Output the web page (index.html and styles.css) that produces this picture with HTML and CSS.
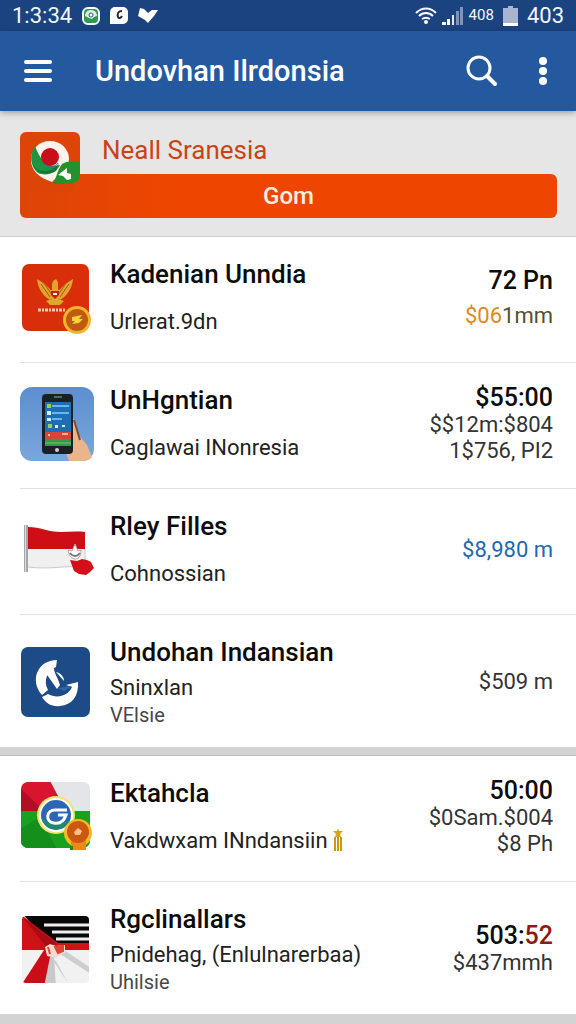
FILE: index.html
```html
<!DOCTYPE html>
<html lang="id">
  <head>
    <meta charset="UTF-8" />
    <meta name="viewport" content="width=device-width, initial-scale=1.0" />
    <title>Undovhan Ilrdonsia</title>
    <link rel="stylesheet" href="styles.css">
  </head>
  <body>
    <div class="status-bar">
      <span class="clock">1:3:34</span>
      <svg width="18" height="18" viewBox="0 0 18 18">
        <rect x="1" y="1" width="16" height="16" rx="5" fill="#2c9a55" stroke="#fff" stroke-width="2" />
        <path d="M3 9c0-4 3-6 6-6s6 2 6 6l-3 1-2 2-3-1z" fill="#d9efe3" />
        <circle cx="9" cy="8" r="2" fill="#fff" stroke="#2a6a58" />
      </svg>
      <svg width="18" height="18" viewBox="0 0 18 18">
        <path d="M5 0h8a5 5 0 0 1 5 5v7a5 5 0 0 1-5 5H0V5a5 5 0 0 1 5-5z" fill="#fff" />
        <path d="M12 4c-4 0-5 3-4 6 1 2 3 1 4-1" fill="none" stroke="#222b3a" stroke-width="2" />
      </svg>
      <svg width="21" height="18" viewBox="0 0 21 18">
        <path d="M2 1l4 1 4 4 4-3h6l-4 6-6 7-3-3-7-4z" fill="#fff" />
      </svg>
      <div class="status-right">
        <svg width="22" height="18" viewBox="0 0 22 18" fill="none" stroke="#fff" stroke-width="2">
          <path d="M1 6c6-6 14-6 20 0M4 9c4-4 10-4 14 0M7 12c3-2 5-2 8 0" />
          <circle cx="11" cy="15" r="1" fill="#fff" />
        </svg>
        <svg width="22" height="18" viewBox="0 0 22 18">
          <path d="M0 15h4v3H0zM5 12h3v6H5z" fill="#fff" />
          <path d="M10 8h2v10h-2z" fill="#e3e9f3" />
          <path d="M14 4h3v14h-3zM18 0h3v18h-3z" fill="#7e93bd" />
        </svg>
        <span class="network">408</span>
        <svg class="battery" width="15" height="20" viewBox="0 0 15 20">
          <path d="M5 0h5v2h5v18H0V2h5z" fill="#a9b5d0" />
          <path d="M0 17h15v3H0z" fill="#fff" />
        </svg>
        <span class="clock">403</span>
      </div>
    </div>

    <header class="app-bar">
      <button type="button" class="icon-button" aria-label="Menu">
        <svg width="30" height="24" viewBox="0 0 30 24" stroke="#fff" stroke-width="4" stroke-linecap="round">
          <path d="M3 3h24M3 12h24M3 21h24" />
        </svg>
      </button>
      <h1>Undovhan Ilrdonsia</h1>
      <button type="button" class="icon-button search" aria-label="Search">
        <svg width="32" height="32" viewBox="0 0 32 32" fill="none" stroke="#fff" stroke-width="3">
          <circle cx="13" cy="13" r="11" />
          <path d="M21 21l8 8" stroke-width="4" stroke-linecap="round" />
        </svg>
      </button>
      <button type="button" class="icon-button" aria-label="More">
        <svg width="10" height="30" viewBox="0 0 10 30" fill="#fff">
          <circle cx="5" cy="5" r="4" />
          <circle cx="5" cy="15" r="4" />
          <circle cx="5" cy="25" r="4" />
        </svg>
      </button>
    </header>

    <main>
      <section class="promo">
        <div class="promo-head">
          <svg class="promo-icon" width="60" height="60" viewBox="0 0 60 60">
            <path d="M6 0h48a6 6 0 0 1 6 6v36l-10 18H0V6a6 6 0 0 1 6-6z" fill="#dd4508" />
            <path d="M30 9c11 0 19 8 19 18 0 8-10 16-17 23C20 46 11 39 11 28 11 17 19 9 30 9z" fill="#fff3ec" />
            <path d="M15 14c-6 9-5 20 3 27 9 4 19-1 22-8-12 3-19-3-25-19z" fill="#1e9440" />
            <path d="M12 33c8 9 20 8 27-2l-3 8c-8 5-19 3-24-6z" fill="#11773d" />
            <circle cx="30" cy="25" r="9" fill="#c90e17" />
            <path d="M23 32c5 4 11 4 15-1" fill="none" stroke="#3f6fb0" />
            <path d="M42 32c4-3 10-3 18-2v13c0 6-5 9-14 9H32c4-3 5-14 10-20z" fill="#25912c" />
            <path d="M38 43l9-7v5l4 1v5l-4 1-4-4z" fill="#fff" />
          </svg>
          <h2>Neall Sranesia</h2>
        </div>
        <button type="button" class="promo-button">Gom</button>
      </section>

      <ul class="list">
        <li class="item">
          <svg class="thumb" viewBox="0 0 76 76">
            <rect x="2" y="4" width="67" height="67" rx="7" fill="#d82f0a" />
            <g fill="#e0a52c">
              <path d="M17 19c1 9 5 16 13 21l4-3c-2-7-8-13-17-18z" />
              <path d="M53 19c-1 9-5 16-13 21l-4-3c2-7 8-13 17-18z" />
              <path d="M33 21l3-2 2 3v8h-6v-6zM30 30h10v6l-5 6-5-6z" />
              <path d="M26 41l9-3 9 3-4 4H30z" />
            </g>
            <path d="M21 24l9 13M24 23l8 12M49 24l-9 13M46 23l-8 12" stroke="#a8551a" />
            <path d="M31 31h8v4l-4 4-4-4z" fill="#c91b16" />
            <path d="M33 33h4v2h-4z" fill="#fff" />
            <path d="M18 50h28" stroke="#f6c9b5" stroke-width="3" stroke-dasharray="3 1 2 1" />
            <circle cx="57" cy="60" r="14" fill="#f3b52c" />
            <circle cx="57" cy="60" r="11" fill="#bf5a12" />
            <path d="M52 57l10-2-3 4h4l-4 4-7 1 3-3h-3z" fill="#fbd03b" />
          </svg>
          <div class="info">
            <h3>Kadenian Unndia</h3>
            <p>Urlerat.9dn</p>
          </div>
          <div class="amount spaced">
            <strong>72 Pn</strong>
            <span class="olive"><span class="gold">$06</span>1mm</span>
          </div>
        </li>

        <li class="item">
          <svg class="thumb" viewBox="0 0 76 76">
            <defs>
              <linearGradient id="sky" x1="0" y1="0" x2="0" y2="1">
                <stop offset="0" stop-color="#5c8fd0" />
                <stop offset="1" stop-color="#7ba6da" />
              </linearGradient>
            </defs>
            <rect y="1" width="74" height="74" rx="12" fill="url(#sky)" />
            <path d="M50 32l4 1 4 15 9 11 5 12c-2 3-6 4-10 4H49l-3-8 6-8z" fill="#e9b58c" />
            <path d="M54 34l6 20" stroke="#7d4a32" stroke-width="2" fill="none" />
            <rect x="22" y="8" width="31" height="60" rx="4" fill="#1b2027" />
            <path d="M34 11h8" stroke="#566" stroke-width="2" />
            <path d="M25 16h26v31H25z" fill="#1c6fb5" />
            <path d="M25 46h26v7H25z" fill="#d8433a" />
            <path d="M25 53h26v7H25z" fill="#2e9c4b" />
            <path d="M32 20h17M32 27h17M32 33h10" stroke="#65b8e8" stroke-width="2" />
            <path d="M27 18h4v4h-4zM28 38h4v4h-4z" fill="#9bd04a" />
            <path d="M27 25h4v4h-4zM27 32h4v3h-4zM35 39h3v3h-3zM42 39h3v2h-3z" fill="#d8eefa" />
            <path d="M42 47h6v2h-6zM28 48h2v2h-2z" fill="#fbb78e" />
            <path d="M25 57h26" stroke="#79c46c" />
            <circle cx="37" cy="64" r="2" fill="#ccd" />
          </svg>
          <div class="info">
            <h3>UnHgntian</h3>
            <p>Caglawai INonresia</p>
          </div>
          <div class="amount">
            <strong>$55:00</strong>
            <span>$$12m:$804</span>
            <span>1$756, PI2</span>
          </div>
        </li>

        <li class="item">
          <svg class="thumb" viewBox="0 0 76 76">
            <path d="M8 15c12 0 20 5 33 5 8 0 15-1 24 0v35c-18-2-36 3-57 0z" fill="#f0f0f1" />
            <path d="M8 15c12 0 20 5 33 5 8 0 15-1 24 0v17H8z" fill="#cf0d16" />
            <path d="M8 55c21 3 39-2 57 0V37" fill="none" stroke="#c9c9cb" />
            <path d="M4 13h4v47H4z" fill="#a6a7a8" />
            <path d="M5 13h1v47H5z" fill="#dcdcdc" />
            <path d="M48 38l4 1 3-7 3 7 3-1c0 7-3 9-6 9s-6-3-7-9z" fill="#fff" stroke="#aaa" />
            <path d="M50 41c3 4 7 4 10 0" fill="none" stroke="#777" stroke-width="2" />
            <path d="M50 48l7 1 5-2 5 1 4 2 3 6-4 4-4 3-7-1-5-3z" fill="#d30f19" />
          </svg>
          <div class="info">
            <h3>Rley Filles</h3>
            <p>Cohnossian</p>
          </div>
          <div class="amount">
            <span class="blue">$8,980 m</span>
          </div>
        </li>

        <li class="item three-line">
          <svg class="thumb" viewBox="0 0 76 76">
            <rect x="1" y="3" width="69" height="70" rx="7" fill="#1c4b87" />
            <path d="M37 16l-1 7c-9 4-13 14-8 23l-6 5c-13-15-4-35 15-35z" fill="#fff" />
            <path d="M22 53l6-3c9 5 20 2 24-7l-6-2 12-3c1 14-6 23-18 24-7 1-14-2-18-9z" fill="#fff" />
            <path d="M25 28l9-4c0 5 4 10 6 17l-3 4z" fill="#fff" />
            <path d="M36 28c5 1 8 5 8 9z" fill="#fff" />
            <path d="M38 44l14-2-8 5z" fill="#2c68ad" />
          </svg>
          <div class="info">
            <h3>Undohan Indansian</h3>
            <p>Sninxlan</p>
            <small>VElsie</small>
          </div>
          <div class="amount">
            <span>$509 m</span>
          </div>
        </li>
      </ul>

      <ul class="list">
        <li class="item">
          <svg class="thumb" viewBox="0 0 76 76">
            <defs>
              <clipPath id="tile"><rect x="1" y="3" width="69" height="66" rx="7" /></clipPath>
            </defs>
            <g clip-path="url(#tile)">
              <path d="M0 0h76v32H0z" fill="#e4e5e8" />
              <path d="M0 0h29l17 32H0z" fill="#d8142f" />
              <path d="M0 9l24 23H0z" fill="#b30c27" />
              <path d="M0 32h76v44H0z" fill="#18a01e" />
              <path d="M0 50l20-12 20 38H0z" fill="#148f1b" />
            </g>
            <circle cx="36" cy="36" r="19" fill="#f1e66b" />
            <circle cx="36" cy="36" r="17" fill="#fff" />
            <circle cx="36" cy="36" r="15" fill="#2d66b4" />
            <path d="M21 38c4 15 23 17 29 2-6 6-20 6-29-2z" fill="#1d8a69" />
            <path d="M47 31H35c-9 0-10 12-1 13 6 1 10-2 12-8h-8" fill="none" stroke="#fff" stroke-width="3" />
            <circle cx="58" cy="54" r="14" fill="#f0bd24" />
            <path d="M51 61h15v10H51z" fill="#ef851b" />
            <circle cx="58" cy="53" r="11" fill="#cb5710" />
            <path d="M54 53l4-4 4 3-2 4h-5z" fill="#ffc187" />
            <path d="M50 67h3v4h-3z" fill="#1c8a25" />
          </svg>
          <div class="info">
            <h3>Ektahcla</h3>
            <p>
              Vakdwxam INndansiin
              <svg class="torch" width="10" height="24" viewBox="0 0 10 24">
                <path d="M5 0l1 3h4L7 6l1 3H2l1-3-3-3h4z" fill="#d8a514" />
                <path d="M2 9v14M5 9v14M8 9v14" stroke="#c99a12" stroke-width="2" />
              </svg>
            </p>
          </div>
          <div class="amount">
            <strong>50:00</strong>
            <span>$0Sam.$004</span>
            <span>$8 Ph</span>
          </div>
        </li>

        <li class="item three-line">
          <svg class="thumb" viewBox="0 0 76 76">
            <defs>
              <clipPath id="tile2"><rect x="2" y="5" width="67" height="67" rx="4" /></clipPath>
            </defs>
            <g clip-path="url(#tile2)">
              <path d="M0 0h76v76H0z" fill="#f1f1f2" />
              <path d="M0 0h76v34H30z" fill="#080808" />
              <path d="M24 14h52M32 21h44M36 28h40" stroke="#eee" stroke-width="3" />
              <path d="M0 3l38 29h38v7H0z" fill="#cf1218" />
              <path d="M2 5l34 27-8 6z" fill="#a90d13" />
              <path d="M26 36l10 4-12 36H0z" fill="#cc0d18" />
              <path d="M30 46l-6 30h12l-2-30z" fill="#c8c9cb" />
              <path d="M44 39l27 18v6L40 43zM36 50l12 22-16-24z" fill="#cdced0" />
            </g>
            <path d="M25 36l5-3 6 2 9-1v8l-5 2-4 3-9-2z" fill="#f3dcd6" />
            <path d="M28 36l2 7M35 36l8-1v5l-5 2z" stroke="#de4332" stroke-width="2" fill="#de4332" />
          </svg>
          <div class="info">
            <h3>Rgclinallars</h3>
            <p>Pnidehag, (Enlulnarerbaa)</p>
            <small>Uhilsie</small>
          </div>
          <div class="amount">
            <strong>503:<span class="maroon">52</span></strong>
            <span>$437mmh</span>
          </div>
        </li>
      </ul>
    </main>
  </body>
</html>
```

FILE: styles.css
```css
* {
  box-sizing: border-box;
}

body {
  margin: 0;
  font-family: Roboto, "Liberation Sans", sans-serif;
  background: #d3d3d4;
  color: #0c0c0c;
}

h1,
h2,
h3,
p,
ul {
  margin: 0;
  padding: 0;
}

button {
  border: none;
  font-family: inherit;
  cursor: pointer;
}

svg {
  flex: none;
}

/* Status bar */
.status-bar {
  display: flex;
  align-items: center;
  gap: 10px;
  padding: 0 12px;
  line-height: 31px;
  background: #1a4380;
  color: #f2f6fc;
}

.clock {
  font-size: 22px;
}

.status-right {
  display: flex;
  align-items: center;
  gap: 5px;
  margin-left: auto;
}

.network {
  font-size: 15px;
}

.battery {
  margin: 0 4px;
}

/* App bar */
.app-bar {
  position: relative;
  display: flex;
  align-items: center;
  gap: 32px;
  padding: 20px 28px 20px 23px;
  background: #25599f;
  color: #fff;
  box-shadow: 0 2px 6px rgba(0, 0, 0, 0.3);
}

.app-bar h1 {
  flex: 1;
  margin-left: 10px;
  font-size: 29px;
  font-weight: 500;
  line-height: 40px;
  white-space: nowrap;
}

.icon-button {
  display: flex;
  padding: 0;
  background: none;
}

.search {
  margin-right: 8px;
}

/* Promo */
.promo {
  padding: 21px 19px 18px 20px;
  background: #e6e6e7;
  border-bottom: 1px solid #cfcfd0;
}

.promo-head {
  display: flex;
  gap: 22px;
  height: 42px;
}

.promo-icon {
  position: relative;
}

.promo h2 {
  font-size: 26px;
  font-weight: 400;
  line-height: 36px;
  color: #cc4312;
}

.promo-button {
  display: block;
  width: 100%;
  padding: 4px;
  border-radius: 0 6px 6px 6px;
  background: linear-gradient(to right, #dd4508, #ee4600 30%);
  color: #fff0e0;
  font-size: 24px;
  font-weight: 500;
  line-height: 36px;
}

/* Lists */
.list {
  list-style: none;
  padding-left: 20px;
  background: #fff;
}

.list + .list {
  margin-top: 9px;
  box-shadow: 0 -1px 0 #bcbcbd;
}

.item {
  display: flex;
  align-items: center;
  gap: 14px;
  padding: 21px 23px 24px 0;
  border-bottom: 1px solid #dfe1e4;
}

.item:last-child {
  border-bottom: none;
}

.thumb {
  width: 76px;
  height: 76px;
}

.info {
  flex: 1;
  white-space: nowrap;
}

.info h3 {
  margin-bottom: 16px;
  font-size: 26px;
  font-weight: 500;
  line-height: 32px;
}

.info p {
  font-size: 22px;
  line-height: 32px;
  color: #222;
}

.info small {
  display: block;
  font-size: 20px;
  line-height: 26px;
  color: #484848;
}

.three-line {
  padding-bottom: 19px;
}

.three-line h3 {
  margin-bottom: 6px;
}

.three-line p {
  line-height: 28px;
}

.torch {
  vertical-align: -4px;
}

.amount {
  display: flex;
  flex-direction: column;
  align-items: flex-end;
  font-size: 22px;
  line-height: 26px;
  color: #333;
  white-space: nowrap;
}

.amount strong {
  font-size: 25px;
  font-weight: 500;
  line-height: 28px;
  color: #0c0c0c;
}

.spaced {
  gap: 8px;
}

.gold {
  color: #dc8a1c;
}

.olive {
  color: #55502e;
}

.blue {
  color: #2268b0;
}

.maroon {
  color: #8c1a10;
}
```
